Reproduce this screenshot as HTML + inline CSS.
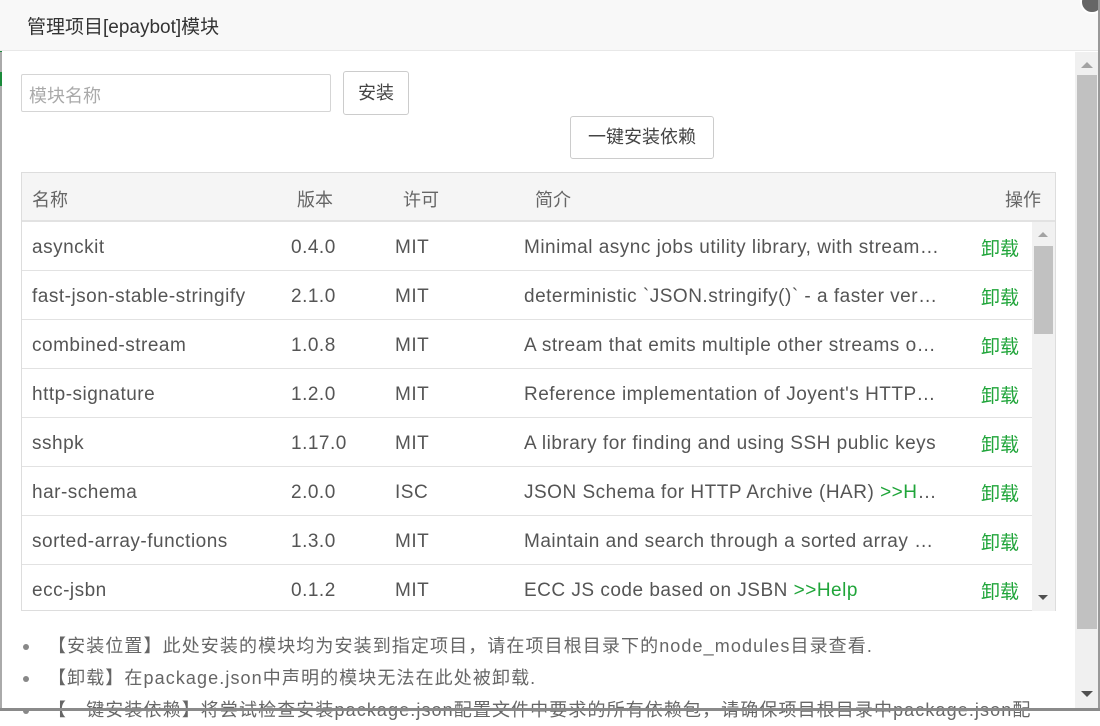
<!DOCTYPE html>
<html><head><meta charset="utf-8"><style>
*{margin:0;padding:0;box-sizing:border-box}
body{width:1100px;height:711px;overflow:hidden;background:#fff;font-family:"Liberation Sans","Noto Sans CJK SC",sans-serif;color:#555;position:relative}
.a{position:absolute}
.title{left:0;top:0;width:1098px;height:51px;background:#f8f8f8;border-bottom:1px solid #e8e8e8;font-size:19px;color:#333;padding:12px 0 0 27px}
.inp{left:21px;top:74px;width:310px;height:38px;border:1px solid #d5d5d5;border-radius:2px;font-size:18px;color:#aaa;padding:7px 0 0 7px}
.btn{border:1px solid #ccc;border-radius:3px;background:#fff;font-size:18px;color:#444;text-align:center}
.tbl{left:21px;top:172px;width:1035px;height:439px;border:1px solid #ddd}
.hd{left:0;top:0;width:1033px;height:49px;background:#f5f5f5;border-bottom:2px solid #e2e2e2;font-size:18px;color:#666}
.row{left:0;width:1010px;height:49px;border-bottom:1px solid #e2e2e2;font-size:19px;color:#555;letter-spacing:0.5px}
.hd span{position:absolute;top:13px;white-space:nowrap}
.row span{position:absolute;top:15px;white-space:nowrap}
.row span.g{top:12px;letter-spacing:0}
.g{color:#20a53a}
.desc{width:416px;overflow:hidden;text-overflow:ellipsis}
ul{position:absolute;left:48px;top:630px;font-size:18px;color:#666;line-height:32px;letter-spacing:1.1px;list-style:none;white-space:nowrap}
li{position:relative}
li:before{content:"";position:absolute;left:-25px;top:14px;width:6px;height:6px;border-radius:50%;background:#888}
</style></head><body>
<div class="a" style="left:0;top:0;width:2px;height:711px;background:#aaa"></div>
<div class="a" style="left:0;top:40px;width:2px;height:12px;background:#1a8a3a"></div>
<div class="a" style="left:0;top:72px;width:2px;height:14px;background:#1a8a3a"></div>
<div class="a title">管理项目[epaybot]模块</div>
<div class="a" style="left:1080px;top:-10px;width:24px;height:24px;border-radius:50%;background:#666;border:2px solid #fff"></div>
<div class="a inp">模块名称</div>
<div class="a btn" style="left:343px;top:71px;width:66px;height:44px;line-height:42px">安装</div>
<div class="a btn" style="left:570px;top:116px;width:144px;height:43px;line-height:41px">一键安装依赖</div>
<div class="a tbl">
 <div class="a hd"><span style="left:10px">名称</span><span style="left:275px">版本</span><span style="left:381px">许可</span><span style="left:513px">简介</span><span style="left:983px">操作</span></div>
 <div class="a" style="left:0;top:49px;width:1033px;height:389px;overflow:hidden">
  <div class="a row" style="top:0"><span style="left:10px">asynckit</span><span style="left:269px">0.4.0</span><span style="left:373px">MIT</span><span class="desc" style="left:502px">Minimal async jobs utility library, with streams support</span><span class="g" style="left:959px">卸载</span></div>
  <div class="a row" style="top:49px"><span style="left:10px">fast-json-stable-stringify</span><span style="left:269px">2.1.0</span><span style="left:373px">MIT</span><span class="desc" style="left:502px">deterministic `JSON.stringify()` - a faster version</span><span class="g" style="left:959px">卸载</span></div>
  <div class="a row" style="top:98px"><span style="left:10px">combined-stream</span><span style="left:269px">1.0.8</span><span style="left:373px">MIT</span><span class="desc" style="left:502px">A stream that emits multiple other streams one after</span><span class="g" style="left:959px">卸载</span></div>
  <div class="a row" style="top:147px"><span style="left:10px">http-signature</span><span style="left:269px">1.2.0</span><span style="left:373px">MIT</span><span class="desc" style="left:502px">Reference implementation of Joyent's HTTP Signature</span><span class="g" style="left:959px">卸载</span></div>
  <div class="a row" style="top:196px"><span style="left:10px">sshpk</span><span style="left:269px">1.17.0</span><span style="left:373px">MIT</span><span class="desc" style="left:502px">A library for finding and using SSH public keys</span><span class="g" style="left:959px">卸载</span></div>
  <div class="a row" style="top:245px"><span style="left:10px">har-schema</span><span style="left:269px">2.0.0</span><span style="left:373px">ISC</span><span class="desc" style="left:502px">JSON Schema for HTTP Archive (HAR) <b class="g" style="font-weight:normal">&gt;&gt;Help</b></span><span class="g" style="left:959px">卸载</span></div>
  <div class="a row" style="top:294px"><span style="left:10px">sorted-array-functions</span><span style="left:269px">1.3.0</span><span style="left:373px">MIT</span><span class="desc" style="left:502px">Maintain and search through a sorted array using</span><span class="g" style="left:959px">卸载</span></div>
  <div class="a row" style="top:343px;border-bottom:none"><span style="left:10px">ecc-jsbn</span><span style="left:269px">0.1.2</span><span style="left:373px">MIT</span><span class="desc" style="left:502px">ECC JS code based on JSBN <b class="g" style="font-weight:normal">&gt;&gt;Help</b></span><span class="g" style="left:959px">卸载</span></div>
  <div class="a" style="left:1010px;top:0;width:23px;height:389px;background:#f1f1f1"></div>
  <div class="a" style="left:1012px;top:24px;width:19px;height:88px;background:#c1c1c1"></div>
  <div class="a" style="left:1016px;top:10px;border:5px solid transparent;border-bottom:5px solid #a3a3a3;border-top:none;width:0"></div>
  <div class="a" style="left:1016px;top:373px;border:5px solid transparent;border-top:5px solid #505050;border-bottom:none;width:0"></div>
 </div>
</div>
<ul>
<li>【安装位置】此处安装的模块均为安装到指定项目，请在项目根目录下的node_modules目录查看.</li>
<li>【卸载】在package.json中声明的模块无法在此处被卸载.</li>
<li>【一键安装依赖】将尝试检查安装package.json配置文件中要求的所有依赖包，请确保项目根目录中package.json配</li>
</ul>
<div class="a" style="left:1075px;top:52px;width:23px;height:656px;background:#f0f0f0"></div>
<div class="a" style="left:1077px;top:75px;width:20px;height:554px;background:#c1c1c1"></div>
<div class="a" style="left:1081px;top:62px;border:6px solid transparent;border-bottom:6px solid #a3a3a3;border-top:none;width:0"></div>
<div class="a" style="left:1081px;top:691px;border:6px solid transparent;border-top:6px solid #505050;border-bottom:none;width:0"></div>
<div class="a" style="left:1098px;top:0;width:2px;height:711px;background:#999;z-index:5"></div>
<div class="a" style="left:0;top:708px;width:1100px;height:3px;background:#8a8a8a;z-index:5"></div>
</body></html>
